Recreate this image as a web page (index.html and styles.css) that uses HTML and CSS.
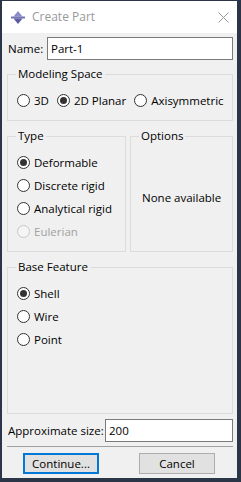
FILE: index.html
```html
<!DOCTYPE html>
<html>
<head>
<meta charset="utf-8">
<link rel="stylesheet" href="styles.css">
</head>
<body>
<div class="window">
  <div class="titlebar">
    <svg class="app-icon" width="14" height="13" viewBox="0 0 14 13">
      <polygon points="7,0 11.5,5.5 2.5,5.5" fill="#8c8cc8"/>
      <rect x="0" y="5.5" width="14" height="2" fill="#7474b4"/>
      <polygon points="2.5,7.5 11.5,7.5 7,13" fill="#5c5ca2"/>
    </svg>
    <span class="title">Create Part</span>
    <svg class="close" width="11" height="11" viewBox="0 0 11 11">
      <path d="M0.5 0.5 L10.5 10.5 M10.5 0.5 L0.5 10.5" stroke="#9a9a9a" stroke-width="1" fill="none"/>
    </svg>
  </div>
  <div class="content">
    <div class="field-row name-row">
      <label class="field-label name-label">Name:</label>
      <div class="input">Part-1</div>
    </div>

    <fieldset class="group modeling">
      <legend>Modeling Space</legend>
      <div class="radio-line">
        <span class="opt"><span class="radio"></span>3D</span>
        <span class="opt"><span class="radio on"></span>2D Planar</span>
        <span class="opt"><span class="radio"></span>Axisymmetric</span>
      </div>
    </fieldset>

    <div class="split">
      <fieldset class="group type">
        <legend>Type</legend>
        <div class="opt-row"><span class="radio on"></span>Deformable</div>
        <div class="opt-row"><span class="radio"></span>Discrete rigid</div>
        <div class="opt-row"><span class="radio"></span>Analytical rigid</div>
        <div class="opt-row disabled"><span class="radio"></span>Eulerian</div>
      </fieldset>
      <fieldset class="group options">
        <legend>Options</legend>
        <div class="none">None available</div>
      </fieldset>
    </div>

    <fieldset class="group base">
      <legend>Base Feature</legend>
      <div class="opt-row"><span class="radio on"></span>Shell</div>
      <div class="opt-row"><span class="radio"></span>Wire</div>
      <div class="opt-row"><span class="radio"></span>Point</div>
    </fieldset>

    <div class="field-row size-row">
      <label class="field-label size-label">Approximate size:</label>
      <div class="input">200</div>
    </div>

    <div class="separator"></div>

    <div class="buttons">
      <div class="btn focus">Continue...</div>
      <div class="btn">Cancel</div>
    </div>
  </div>
</div>
</body>
</html>
```

FILE: styles.css
```css
* { box-sizing: border-box; }
html, body {
  margin: 0;
  padding: 0;
  background: #2a3647;
}
body {
  width: 241px;
  height: 482px;
  padding: 1px 4px 4px 2px;
  font-family: "Open Sans", "Noto Sans", sans-serif;
  font-size: 11.5px;
  line-height: 16px;
  color: #000;
}
.window {
  width: 235px;
  height: 477px;
  background: #f0f0f0;
  display: flex;
  flex-direction: column;
}
.titlebar {
  height: 32px;
  background: #fff;
  display: flex;
  align-items: center;
  padding-left: 9px;
}
.app-icon { display: block; }
.title {
  margin-left: 7px;
  color: #999;
  font-size: 12px;
  flex: 1;
}
.close {
  display: block;
  margin-right: 8px;
}
.content {
  padding: 4px 4px 0 5px;
  display: flex;
  flex-direction: column;
}
.field-row {
  display: flex;
  align-items: center;
  height: 23px;
}
.field-label { padding-left: 1px; }
.name-label { width: 40px; }
.size-label { width: 98px; }
.input {
  flex: 1;
  height: 23px;
  background: #fff;
  border: 1px solid #7a7a7a;
  padding: 2px 3px;
  line-height: 17px;
}
.group {
  margin: 0;
  border: 1px solid #dcdcdc;
  min-width: 0;
  padding-left: 0;
  padding-right: 0;
}
.group legend {
  padding: 0 2px;
  margin-left: 8px;
  line-height: 16px;
}
.modeling {
  margin-top: 6px;
  padding-top: 7px;
  padding-bottom: 8px;
}
.radio-line {
  display: flex;
  height: 23px;
  align-items: center;
  padding-left: 9px;
}
.opt {
  display: flex;
  align-items: center;
  margin-right: 8px;
}
.radio {
  width: 13px;
  height: 13px;
  border: 1px solid #333;
  border-radius: 50%;
  background: #fff;
  margin-right: 4px;
  display: flex;
  align-items: center;
  justify-content: center;
  flex: none;
}
.radio.on::after {
  content: "";
  width: 7px;
  height: 7px;
  border-radius: 50%;
  background: #333;
}
.split {
  margin-top: 7px;
  display: flex;
  gap: 4px;
}
.type {
  width: 119px;
  padding-top: 7px;
  padding-bottom: 8px;
}
.options {
  flex: 1;
  padding-top: 0;
  padding-bottom: 0;
  display: flex;
  flex-direction: column;
  justify-content: center;
}
.opt-row {
  display: flex;
  align-items: center;
  height: 23px;
  padding-left: 9px;
}
.opt-row.disabled { color: #a0a0a0; }
.opt-row.disabled .radio { border-color: #c8c8c8; background: #f4f4f4; }
.none { padding-left: 11px; }
.base {
  margin-top: 7px;
  padding-top: 7px;
  padding-bottom: 62px;
}
.size-row { margin-top: 5px; }
.separator {
  margin-top: 4px;
  height: 1px;
  background: #a0a0a0;
}
.buttons {
  margin-top: 6px;
  display: flex;
  padding-left: 16px;
  gap: 40px;
}
.btn {
  width: 76px;
  height: 21px;
  background: #e1e1e1;
  border: 1px solid #adadad;
  display: flex;
  align-items: center;
  justify-content: center;
}
.btn.focus {
  border: 2px solid #0078d7;
}
```
